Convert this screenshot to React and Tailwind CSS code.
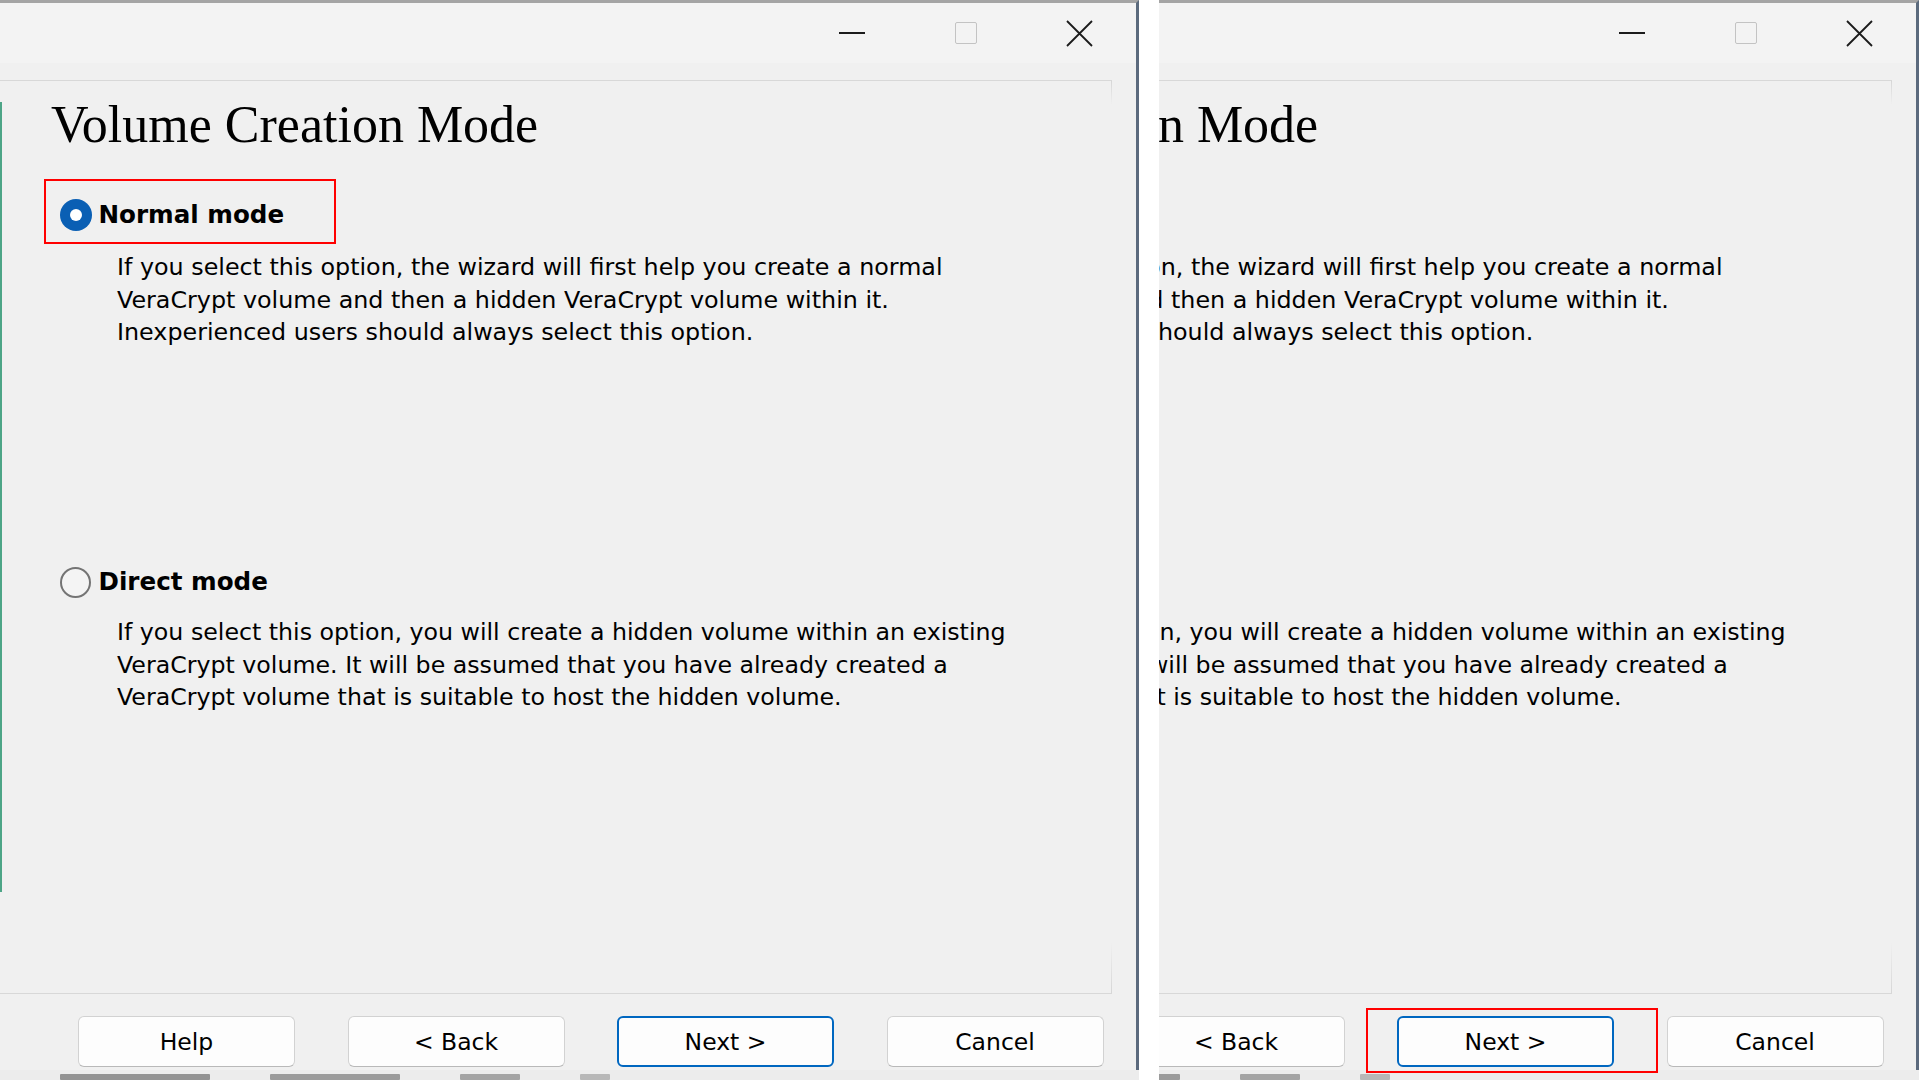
import React from 'react';

const lines1 = [
  'If you select this option, the wizard will first help you create a normal',
  'VeraCrypt volume and then a hidden VeraCrypt volume within it.',
  'Inexperienced users should always select this option.',
];

const lines2 = [
  'If you select this option, you will create a hidden volume within an existing',
  'VeraCrypt volume. It will be assumed that you have already created a',
  'VeraCrypt volume that is suitable to host the hidden volume.',
];

const Radio = ({ checked }) =>
  checked ? (
    <span className="w-[32px] h-[32px] rounded-full bg-[#0a5fb4] flex items-center justify-center shrink-0">
      <span className="w-[12px] h-[12px] rounded-full bg-white" />
    </span>
  ) : (
    <span className="w-[31px] h-[31px] rounded-full border-2 border-[#747474] bg-[#f4f4f4] shrink-0" />
  );

const Button = ({ label, primary }) => (
  <button
    className={
      primary
        ? 'w-[217px] h-[51px] rounded-[6px] bg-[#fdfdfd] border-2 border-[#0067c0] text-black text-[23.5px] flex items-center justify-center pt-[3px]'
        : 'w-[217px] h-[51px] rounded-[6px] bg-[#fdfdfd] border border-[#d2d2d2] border-b-[#b9b9b9] text-black text-[23.5px] flex items-center justify-center pt-[3px]'
    }
  >
    {label}
  </button>
);

const TitleBar = () => (
  <div className="h-[60px] bg-[#f3f3f3] flex justify-end shrink-0">
    <div className="w-[113.5px] flex items-center justify-center">
      <svg width="26" height="4" viewBox="0 0 26 4">
        <line x1="0" y1="2" x2="26" y2="2" stroke="#1b1b1b" strokeWidth="2" />
      </svg>
    </div>
    <div className="w-[113.5px] flex items-center justify-center">
      <div className="w-[22px] h-[22px] rounded-[2px] border border-[#c3c3c3]" />
    </div>
    <div className="w-[113.5px] flex items-center justify-center">
      <svg width="27" height="27" viewBox="0 0 27 27">
        <path d="M1 1 L26 26 M26 1 L1 26" stroke="#1b1b1b" strokeWidth="1.8" fill="none" />
      </svg>
    </div>
  </div>
);

const Dialog = ({ className = '', markNext = false }) => (
  <div
    className={`w-[1139px] h-[1070px] shrink-0 flex flex-col bg-[#f0f0f0] border-t-[3px] border-t-[#a4a4a4] border-r-[3px] border-r-[#5b6a7d] ${className}`}
  >
    <TitleBar />
    <div className="flex-1 flex flex-col pt-[17px]">
      {/* group box */}
      <div className="w-[1112px] h-[914px] border-t border-b border-[#d8d8d8] flex">
        <div className="w-[2px] h-[790px] mt-[21px] bg-[#4da587] shrink-0" />
        <div className="flex-1 flex flex-col">
          <h1 className="ml-[49px] mt-[18px] text-[52px] leading-none text-black font-['Liberation_Serif',serif] whitespace-nowrap">
            Volume Creation Mode
          </h1>
          <div className="ml-[42px] mt-[28px] w-[292px] h-[65px] border-2 border-[#ff0000] flex items-center pl-[13.5px] pt-[7px] gap-[7px]">
            <Radio checked />
            <span className="text-[24.6px] font-bold text-black whitespace-nowrap">Normal mode</span>
          </div>
          <div className="ml-[115px] mt-[7px] text-[23.8px] leading-[32.5px] text-black">
            {lines1.map((l) => (
              <div key={l} className="whitespace-nowrap">{l}</div>
            ))}
          </div>
          <div className="ml-[57.5px] mt-[218px] h-[32px] flex items-center gap-[8px]">
            <Radio />
            <span className="text-[24.6px] font-bold text-black whitespace-nowrap">Direct mode</span>
          </div>
          <div className="ml-[115px] mt-[17.5px] text-[23.7px] leading-[32.5px] text-black">
            {lines2.map((l) => (
              <div key={l} className="whitespace-nowrap">{l}</div>
            ))}
          </div>
        </div>
        <div className="w-px h-full shrink-0 bg-[linear-gradient(to_bottom,#d6d6d6_0px,#f0f0f0_24px,#f0f0f0_860px,#d6d6d6_912px)]" />
      </div>

      {/* buttons */}
      <div className="mt-[22px] pl-[78px] flex gap-[52.5px]">
        <Button label="Help" />
        <Button label="< Back" />
        <div className="relative">
          <Button label="Next >" primary />
          {markNext && (
            <span className="absolute left-[-31px] top-[-8px] w-[292px] h-[65px] border-2 border-[#ff0000] z-10 pointer-events-none" />
          )}
        </div>
        <Button label="Cancel" />
      </div>
    </div>
  </div>
);

const Strip = () => (
  <div className="h-[10px] bg-[#ececec] flex items-start gap-[60px] pl-[60px] pt-[4px] overflow-hidden">
    <div className="w-[150px] h-[6px] bg-[#3a3a3a] opacity-50 rounded-[1px]" />
    <div className="w-[130px] h-[6px] bg-[#3a3a3a] opacity-45 rounded-[1px]" />
    <div className="w-[60px] h-[6px] bg-[#3a3a3a] opacity-40 rounded-[1px]" />
    <div className="w-[30px] h-[6px] bg-[#3a3a3a] opacity-30 rounded-[1px]" />
  </div>
);

export default function App() {
  return (
    <div className="w-[1920px] h-[1080px] overflow-hidden flex bg-white font-['DejaVu_Sans',sans-serif]">
      <div className="flex flex-col shrink-0">
        <Dialog />
        <Strip />
      </div>
      <div className="w-[20px] h-full bg-white shrink-0" />
      <div className="flex-1 min-w-0 overflow-hidden flex flex-col">
        <Dialog className="ml-[-379px]" markNext />
        <div className="ml-[-379px] w-[1139px]">
          <Strip />
        </div>
      </div>
    </div>
  );
}
